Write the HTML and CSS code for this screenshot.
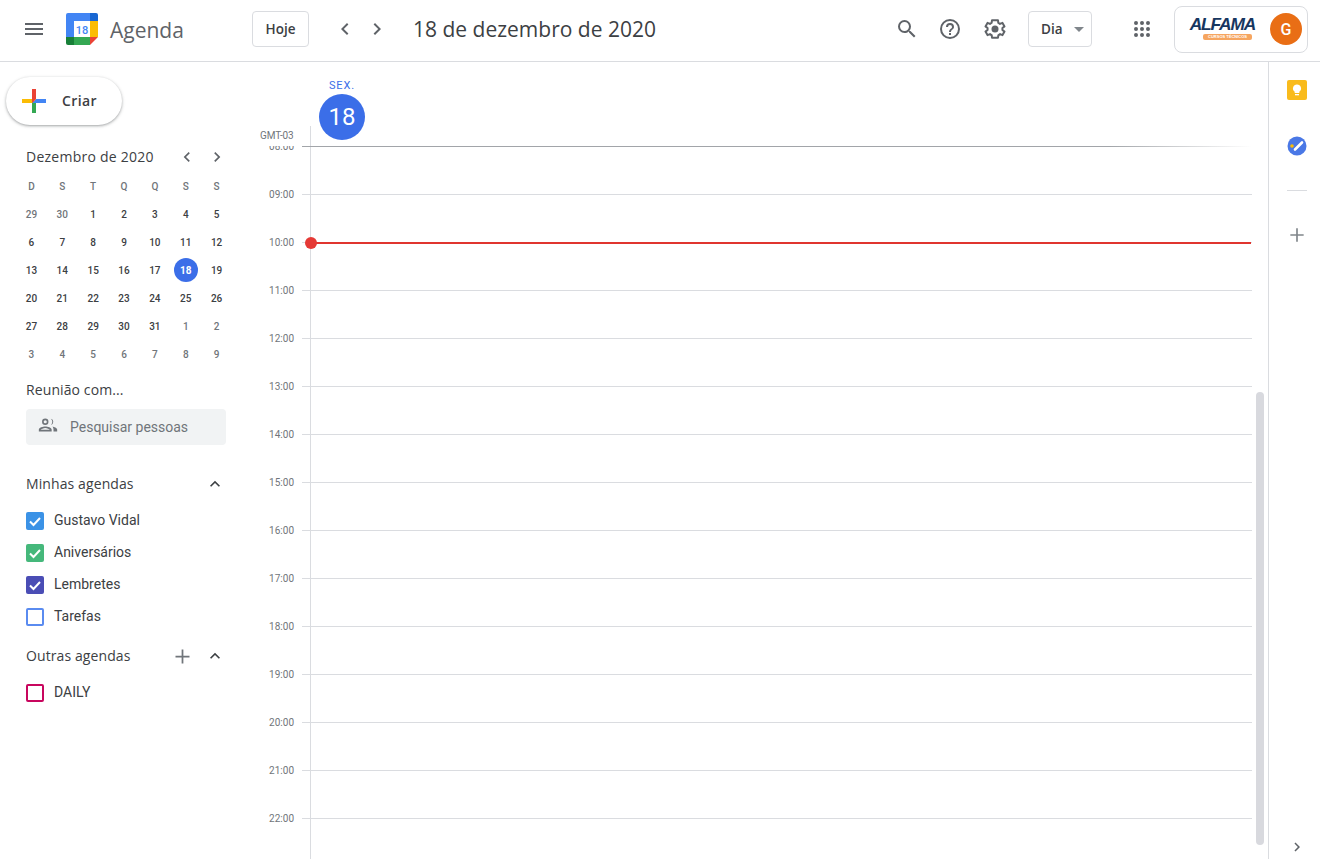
FILE: index.html
```html
<!DOCTYPE html>
<html lang="pt-BR">
<head>
<meta charset="utf-8">
<title>Agenda</title>
<link rel="stylesheet" href="styles.css">
</head>
<body>
<header class="topbar">
  <button class="icon-btn menu" aria-label="Menu"><svg viewBox="0 0 24 24" width="24" height="24"><path d="M3 18h18v-2H3v2zm0-5h18v-2H3v2zm0-7v2h18V6H3z" fill="#5f6368"/></svg></button>
  <div class="brand">
    <svg class="logo" viewBox="0 0 32 32" width="32" height="32">
      <path d="M2 0h22v8H8v16H0V2a2 2 0 0 1 2-2z" fill="#4285f4"/>
      <path d="M24 0h6a2 2 0 0 1 2 2v6h-8z" fill="#1967d2"/>
      <rect x="24" y="8" width="8" height="16" fill="#fbbc04"/>
      <path d="M8 24h16v8H8z" fill="#34a853"/>
      <path d="M0 24h8v8H2a2 2 0 0 1-2-2z" fill="#188038"/>
      <path d="M24 24h8l-8 8z" fill="#ea4335"/>
      <rect x="8" y="8" width="16" height="16" fill="#fff"/>
      <text x="16" y="20.5" text-anchor="middle" class="logo-num">18</text>
    </svg>
    <span class="brand-name">Agenda</span>
  </div>
  <button class="outline-btn today">Hoje</button>
  <div class="pager">
    <svg viewBox="0 0 24 24" width="24" height="24"><path d="M15.4 7.4 14 6l-6 6 6 6 1.4-1.4-4.6-4.6z" fill="#5f6368"/></svg>
    <svg viewBox="0 0 24 24" width="24" height="24"><path d="M8.6 16.6 10 18l6-6-6-6-1.4 1.4 4.6 4.600z" fill="#5f6368"/></svg>
  </div>
  <h1 class="date-title">18 de dezembro de 2020</h1>
  <div class="tools">
    <svg viewBox="0 0 24 24" width="24" height="24"><path d="M15.5 14h-.79l-.28-.27A6.471 6.471 0 0 0 16 9.5 6.5 6.5 0 1 0 9.5 16c1.610 0 3.090-.59 4.230-1.570l.27.28v.79l5 4.990L20.490 19l-4.990-5zm-6 0C7.010 14 5 11.990 5 9.500S7.010 5 9.500 5 14 7.010 14 9.500 11.990 14 9.500 14z" fill="#5f6368"/></svg>
    <svg viewBox="0 0 24 24" width="24" height="24"><path d="M11 18h2v-2h-2v2zm1-16a10 10 0 1 0 0 20 10 10 0 0 0 0-20zm0 18a8 8 0 1 1 0-16 8 8 0 0 1 0 16zm0-14a4 4 0 0 0-4 4h2a2 2 0 1 1 4 0c0 2-3 1.750-3 5h2c0-2.250 3-2.500 3-5a4 4 0 0 0-4-4z" fill="#5f6368"/></svg>
    <svg class="gear" viewBox="0 0 24 24" width="24" height="24"><path d="M19.400 13a7.500 7.500 0 0 0 0-2l2.100-1.600-2-3.500-2.500 1a7.500 7.500 0 0 0-1.700-1L15 3.300h-6l-.4 2.600a7.500 7.500 0 0 0-1.700 1l-2.400-1-2 3.500L4.600 11a7.500 7.500 0 0 0 0 2l-2.100 1.600 2 3.500 2.500-1a7.500 7.500 0 0 0 1.700 1l.3 2.600h6l.4-2.600a7.500 7.500 0 0 0 1.700-1l2.400 1 2-3.500z" fill="none" stroke="#5f6368" stroke-width="2" stroke-linejoin="round"/><circle cx="12" cy="12" r="3.500" fill="#5f6368"/></svg>
  </div>
  <button class="outline-btn view">Dia<span class="caret"></span></button>
  <svg class="apps" viewBox="0 0 24 24" width="24" height="24"><path d="M6 8a2 2 0 1 0 0-4 2 2 0 0 0 0 4zm6 12a2 2 0 1 0 0-4 2 2 0 0 0 0 4zm-6 0a2 2 0 1 0 0-4 2 2 0 0 0 0 4zm0-6a2 2 0 1 0 0-4 2 2 0 0 0 0 4zm6 0a2 2 0 1 0 0-4 2 2 0 0 0 0 4zm4-8a2 2 0 1 0 4 0 2 2 0 0 0-4 0zm-4 2a2 2 0 1 0 0-4 2 2 0 0 0 0 4zm6 6a2 2 0 1 0 0-4 2 2 0 0 0 0 4zm0 6a2 2 0 1 0 0-4 2 2 0 0 0 0 4z" fill="#5f6368"/></svg>
  <div class="account">
    <div class="org">
      <span class="org-name">ALFAMA</span>
      <span class="org-sub">CURSOS TÉCNICOS</span>
    </div>
    <span class="avatar">G</span>
  </div>
</header>

<div class="layout">
  <aside class="sidebar">
    <button class="create">
      <svg viewBox="0 0 36 36" width="36" height="36">
        <path d="M16 16v14h4V20z" fill="#34a853"/>
        <path d="M30 16H20l-4 4h14z" fill="#4285f4"/>
        <path d="M6 16v4h10l4-4z" fill="#fbbc05"/>
        <path d="M20 16V6h-4v14z" fill="#ea4335"/>
      </svg>
      <span>Criar</span>
    </button>

    <div class="mini-head">
      <span class="mini-title">Dezembro de 2020</span>
      <svg viewBox="0 0 24 24" width="20" height="20"><path d="M15.4 7.4 14 6l-6 6 6 6 1.400-1.400-4.600-4.600z" fill="#5f6368"/></svg>
      <svg viewBox="0 0 24 24" width="20" height="20"><path d="M8.600 16.600 10 18l6-6-6-6-1.400 1.400 4.600 4.600z" fill="#5f6368"/></svg>
    </div>
    <div class="mini-grid">
      <span class="wd">D</span><span class="wd">S</span><span class="wd">T</span><span class="wd">Q</span><span class="wd">Q</span><span class="wd">S</span><span class="wd">S</span>
      <span class="off">29</span><span class="off">30</span><span>1</span><span>2</span><span>3</span><span>4</span><span>5</span>
      <span>6</span><span>7</span><span>8</span><span>9</span><span>10</span><span>11</span><span>12</span>
      <span>13</span><span>14</span><span>15</span><span>16</span><span>17</span><span class="sel"><b>18</b></span><span>19</span>
      <span>20</span><span>21</span><span>22</span><span>23</span><span>24</span><span>25</span><span>26</span>
      <span>27</span><span>28</span><span>29</span><span>30</span><span>31</span><span class="off">1</span><span class="off">2</span>
      <span class="off">3</span><span class="off">4</span><span class="off">5</span><span class="off">6</span><span class="off">7</span><span class="off">8</span><span class="off">9</span>
    </div>

    <h2 class="section-title meet">Reunião com...</h2>
    <div class="people">
      <svg viewBox="0 0 24 24" width="22" height="22"><path d="M9 12a3.500 3.500 0 1 0 0-7 3.500 3.500 0 0 0 0 7zm0-5.200a1.700 1.700 0 1 1 0 3.400 1.700 1.700 0 0 1 0-3.400zM9 13.500c-2.700 0-7 1.300-7 3.500v2h14v-2c0-2.200-4.300-3.500-7-3.500zM4 17.200c.600-.700 3-1.900 5-1.900s4.400 1.200 5 1.900zM15.100 5.100a3.500 3.500 0 0 1 0 6.800 5 5 0 0 0 0-6.800zM17 13.700c1.500.600 5 1.500 5 3.300v2h-4v-2c0-1.300-.400-2.400-1-3.300z" fill="#70757a"/></svg>
      <span>Pesquisar pessoas</span>
    </div>

    <div class="section-head mine">
      <h2 class="section-title">Minhas agendas</h2>
      <svg class="chev" viewBox="0 0 24 24" width="20" height="20"><path d="M7.400 15.400 12 10.800l4.600 4.600L18 14l-6-6-6 6z" fill="#3c4043"/></svg>
    </div>
    <ul class="cals">
      <li><span class="check c-blue"><svg viewBox="0 0 18 18" width="18" height="18"><path d="M4 9.500 7.500 13 14 6" fill="none" stroke="#fff" stroke-width="2"/></svg></span>Gustavo Vidal</li>
      <li><span class="check c-green"><svg viewBox="0 0 18 18" width="18" height="18"><path d="M4 9.500 7.500 13 14 6" fill="none" stroke="#fff" stroke-width="2"/></svg></span>Aniversários</li>
      <li><span class="check c-indigo"><svg viewBox="0 0 18 18" width="18" height="18"><path d="M4 9.500 7.500 13 14 6" fill="none" stroke="#fff" stroke-width="2"/></svg></span>Lembretes</li>
      <li><span class="check c-empty-blue"></span>Tarefas</li>
    </ul>
    <div class="section-head other">
      <h2 class="section-title">Outras agendas</h2>
      <svg class="plus" viewBox="0 0 24 24" width="21" height="21"><path d="M20 13h-7v7h-2v-7H4v-2h7V4h2v7h7z" fill="#70757a"/></svg>
      <svg class="chev" viewBox="0 0 24 24" width="20" height="20"><path d="M7.400 15.400 12 10.800l4.600 4.600L18 14l-6-6-6 6z" fill="#3c4043"/></svg>
    </div>
    <ul class="cals">
      <li><span class="check c-empty-pink"></span>DAILY</li>
    </ul>
  </aside>

  <main class="day">
    <div class="day-head">
      <span class="tz">GMT-03</span>
      <div class="day-col">
        <span class="dow">SEX.</span>
        <span class="dom">18</span>
      </div>
    </div>
    <div class="hours">
      <div class="hour first"><span class="time">08:00</span><i class="line"></i></div>
      <div class="hour"><span class="time">09:00</span><i class="line"></i></div>
      <div class="hour"><span class="time">10:00</span><i class="line"></i><div class="now"></div></div>
      <div class="hour"><span class="time">11:00</span><i class="line"></i></div>
      <div class="hour"><span class="time">12:00</span><i class="line"></i></div>
      <div class="hour"><span class="time">13:00</span><i class="line"></i></div>
      <div class="hour"><span class="time">14:00</span><i class="line"></i></div>
      <div class="hour"><span class="time">15:00</span><i class="line"></i></div>
      <div class="hour"><span class="time">16:00</span><i class="line"></i></div>
      <div class="hour"><span class="time">17:00</span><i class="line"></i></div>
      <div class="hour"><span class="time">18:00</span><i class="line"></i></div>
      <div class="hour"><span class="time">19:00</span><i class="line"></i></div>
      <div class="hour"><span class="time">20:00</span><i class="line"></i></div>
      <div class="hour"><span class="time">21:00</span><i class="line"></i></div>
      <div class="hour"><span class="time">22:00</span><i class="line"></i></div>
    </div>
    <div class="scroll-thumb"></div>
  </main>

  <nav class="rail">
    <svg class="r-keep" viewBox="0 0 20 20" width="20" height="20"><rect width="20" height="20" rx="2" fill="#f9bb1c"/><path d="M10 4.500a4 4 0 0 0-2.300 7.300V13h4.600v-1.200A4 4 0 0 0 10 4.500z" fill="#fff"/><rect x="8" y="14" width="4" height="1.300" fill="#fff"/></svg>
    <svg class="r-tasks" viewBox="0 0 20 20" width="20" height="20"><circle cx="10" cy="10" r="9.500" fill="#4a78e6"/><path d="M8 13.500 15 6.500" stroke="#fff" stroke-width="2.600" stroke-linecap="round" fill="none"/><circle cx="5" cy="10" r="1.800" fill="#fbbc04"/></svg>
    <hr class="r-div">
    <svg class="r-plus" viewBox="0 0 24 24" width="20" height="20"><path d="M20 13h-7v7h-2v-7H4v-2h7V4h2v7h7z" fill="#80868b"/></svg>
    <svg class="r-more" viewBox="0 0 24 24" width="18" height="18"><path d="M8.600 16.600 10 18l6-6-6-6-1.400 1.400 4.600 4.600z" fill="#5f6368"/></svg>
  </nav>
</div>
</body>
</html>
```
FILE: styles.css
```css
* { box-sizing: border-box; }
html, body { height: 100%; margin: 0; }
body {
  overflow: hidden;
  background: #fff;
  color: #3c4043;
  font-family: Roboto, "Liberation Sans", sans-serif;
  display: flex;
  flex-direction: column;
}
button { font-family: inherit; background: #fff; padding: 0; border: 0; }
h1, h2, ul { margin: 0; padding: 0; font-weight: 400; }
ul { list-style: none; }
svg { display: block; flex: none; }

/* top bar */
.topbar {
  height: 62px;
  flex: none;
  display: flex;
  align-items: center;
  border-bottom: 1px solid #dadce0;
  padding-bottom: 3px;
}
.icon-btn { display: flex; margin-left: 22px; }
.brand { display: flex; align-items: center; margin-left: 20px; width: 186px; }
.logo-num { font: 500 11px Roboto, sans-serif; fill: #4285f4; }
.brand-name {
  margin: 1px 0 0 12px;
  font-family: "Open Sans", sans-serif;
  font-size: 21px;
  color: #5f6368;
}
.outline-btn {
  height: 36px;
  border: 1px solid #dadce0;
  border-radius: 4px;
  font-family: "Open Sans", sans-serif;
  font-size: 13.5px;
  font-weight: 600;
  color: #3c4043;
}
.today { width: 57px; }
.pager { display: flex; gap: 8px; margin-left: 24px; }
.date-title {
  margin-left: 24px;
  width: 482px;
  font-family: "Open Sans", sans-serif;
  font-size: 21px;
  color: #3c4043;
}
.tools { display: flex; gap: 19px; width: 133px; }
.gear { margin-left: 2px; }
.view {
  width: 64px;
  display: flex;
  align-items: center;
  padding-left: 12px;
  gap: 11px;
}
.caret { width: 0; height: 0; border: 5px solid transparent; border-top-color: #80868b; border-bottom: 0; }
.apps { margin-left: 38px; }
.account {
  margin-left: 20px;
  width: 134px;
  height: 47px;
  border: 1px solid #dadce0;
  border-radius: 8px;
  display: flex;
  align-items: center;
  padding: 0 5px 0 14px;
}
.org { flex: 1; display: flex; flex-direction: column; align-items: flex-end; padding-right: 15px; }
.org-name {
  font: italic 700 17px/14px "Liberation Sans", sans-serif;
  letter-spacing: -1.100px;
  color: #17365f;
  transform: scaleX(1.020);
  transform-origin: right;
}
.org-sub {
  margin: 2px 3px 0 0;
  width: 49px;
  height: 6px;
  background: #f6a55f;
  border-radius: 2px;
  color: #fff;
  font: 700 4px/6px "Liberation Sans", sans-serif;
  text-align: center;
  white-space: nowrap;
}
.avatar {
  width: 32px;
  height: 32px;
  border-radius: 50%;
  background: #e96e15;
  color: #fff;
  font-size: 16px;
  font-weight: 500;
  display: flex;
  align-items: center;
  justify-content: center;
}

/* page */
.layout { flex: 1; display: flex; min-height: 0; }

/* sidebar */
.sidebar { width: 256px; flex: none; padding-left: 26px; }
.create {
  margin: 15px 0 0 -20px;
  width: 116px;
  height: 48px;
  border-radius: 24px;
  display: flex;
  align-items: center;
  padding-left: 10px;
  gap: 10px;
  font-family: "Open Sans", sans-serif;
  font-size: 14px;
  letter-spacing: .4px;
  font-weight: 600;
  color: #3c4043;
  box-shadow: 0 1px 2px 0 rgba(60,64,67,.3), 0 1px 3px 1px rgba(60,64,67,.15);
}
.create span { margin-top: -2px; }
.mini-head { display: flex; align-items: center; margin-top: 22px; height: 18px; }
.mini-head svg { margin-top: 2px; }
.mini-title {
  width: 151px;
  font-family: "Open Sans", sans-serif;
  font-size: 14px;
  letter-spacing: .25px;
  color: #3c4043;
}
.mini-head svg + svg { margin-left: 10px; }
.mini-grid {
  margin: 7px 0 0 -10px;
  display: grid;
  grid-template-columns: repeat(7, 30.86px);
  grid-auto-rows: 28px;
  width: 217px;
  font-size: 10px;
  font-weight: 500;
  color: #3c4043;
}
.mini-grid span { display: flex; align-items: center; justify-content: center; }
.mini-grid .off, .mini-grid .wd { color: #70757a; }
.mini-grid .sel b {
  width: 24px;
  flex: none;
  height: 24px;
  border-radius: 50%;
  background: #3b6ee8;
  color: #fff;
  font-weight: 700;
  display: flex;
  align-items: center;
  justify-content: center;
}
.section-title { font-family: "Open Sans", sans-serif; font-size: 14px; letter-spacing: .1px; font-weight: 500; color: #3c4043; line-height: 18px; }
.meet { margin-top: 13px; }
.people {
  margin-top: 10px;
  width: 200px;
  height: 36px;
  background: #f1f3f4;
  border-radius: 4px;
  display: flex;
  align-items: center;
  padding-left: 11px;
  gap: 11px;
  font-size: 14px;
  color: #70757a;
}
.people svg { margin-top: -4px; }
.section-head { display: flex; align-items: center; height: 18px; width: 199px; }
.section-head .section-title { flex: 1; }
.mine { margin-top: 30px; }
.other { margin-top: 15px; }
.plus { margin-right: 12px; }
.cals { margin-top: 11px; }
.cals li { height: 32px; display: flex; align-items: center; gap: 10px; font-size: 14px; color: #3c4043; }
.check { width: 18px; height: 18px; border-radius: 2px; display: block; margin-top: 1px; }
.c-blue { background: #3b92e6; }
.c-green { background: #45b87b; }
.c-indigo { background: #4a4db5; }
.c-empty-blue { border: 2px solid #5a8bf0; }
.c-empty-pink { border: 2px solid #c8065e; }
.other + .cals { margin-top: 11px; }

/* day view */
.day {
  flex: 1;
  min-width: 0;
  position: relative;
  display: flex;
  flex-direction: column;
}
.day::before {
  content: "";
  position: absolute;
  left: 54px;
  top: 64px;
  bottom: 0;
  width: 1px;
  background: #dadce0;
}
.day-head { height: 84px; flex: none; display: flex; }
.tz { width: 38px; margin: 68px 0 0 4px; font-size: 10px; line-height: 12px; color: #70757a; white-space: nowrap; letter-spacing: -.1px; }
.day-col { margin-left: 21px; width: 46px; display: flex; flex-direction: column; align-items: center; }
.dow { margin-top: 18px; font-size: 11px; line-height: 12px; font-weight: 400; color: #3b6ee8; letter-spacing: .9px; }
.dom {
  margin-top: 2px;
  width: 46px;
  height: 46px;
  flex: none;
  border-radius: 50%;
  background: #3b6ee8;
  color: #fff;
  font-size: 24px;
  display: flex;
  align-items: center;
  justify-content: center;
}
.hours { flex: 1; min-height: 0; overflow: hidden; padding-right: 16px; }
.hour { position: relative; height: 48px; display: flex; align-items: flex-start; }
.time { width: 38px; margin-top: -6px; font-size: 10px; line-height: 14px; color: #70757a; text-align: right; }
.line { flex: 1; margin-left: 8px; height: 1px; background: #dadce0; }
.first .line { background: linear-gradient(90deg, #a2a5a9 0, #a2a5a9 85%, #fff 100%); }
.now { position: absolute; left: 54px; right: 1px; top: 0; height: 2px; background: #e0352f; }
.now::before {
  content: "";
  position: absolute;
  left: -5px;
  top: -5px;
  width: 12px;
  height: 12px;
  border-radius: 50%;
  background: #e53935;
}
.scroll-thumb {
  position: absolute;
  right: 4px;
  top: 330px;
  width: 8px;
  height: 453px;
  border-radius: 4px;
  background: #d8d9de;
}

/* right rail */
.rail {
  width: 52px;
  flex: none;
  border-left: 1px solid #dadce0;
  display: flex;
  flex-direction: column;
  align-items: center;
  padding-left: 5px;
}
.r-keep { margin-top: 18px; }
.r-tasks { margin-top: 36px; }
.r-div { width: 20px; height: 1px; border: 0; margin: 34px 0 0; background: #dadce0; }
.r-plus { margin-top: 34px; }
.r-more { margin-top: auto; margin-bottom: 3px; }
```
